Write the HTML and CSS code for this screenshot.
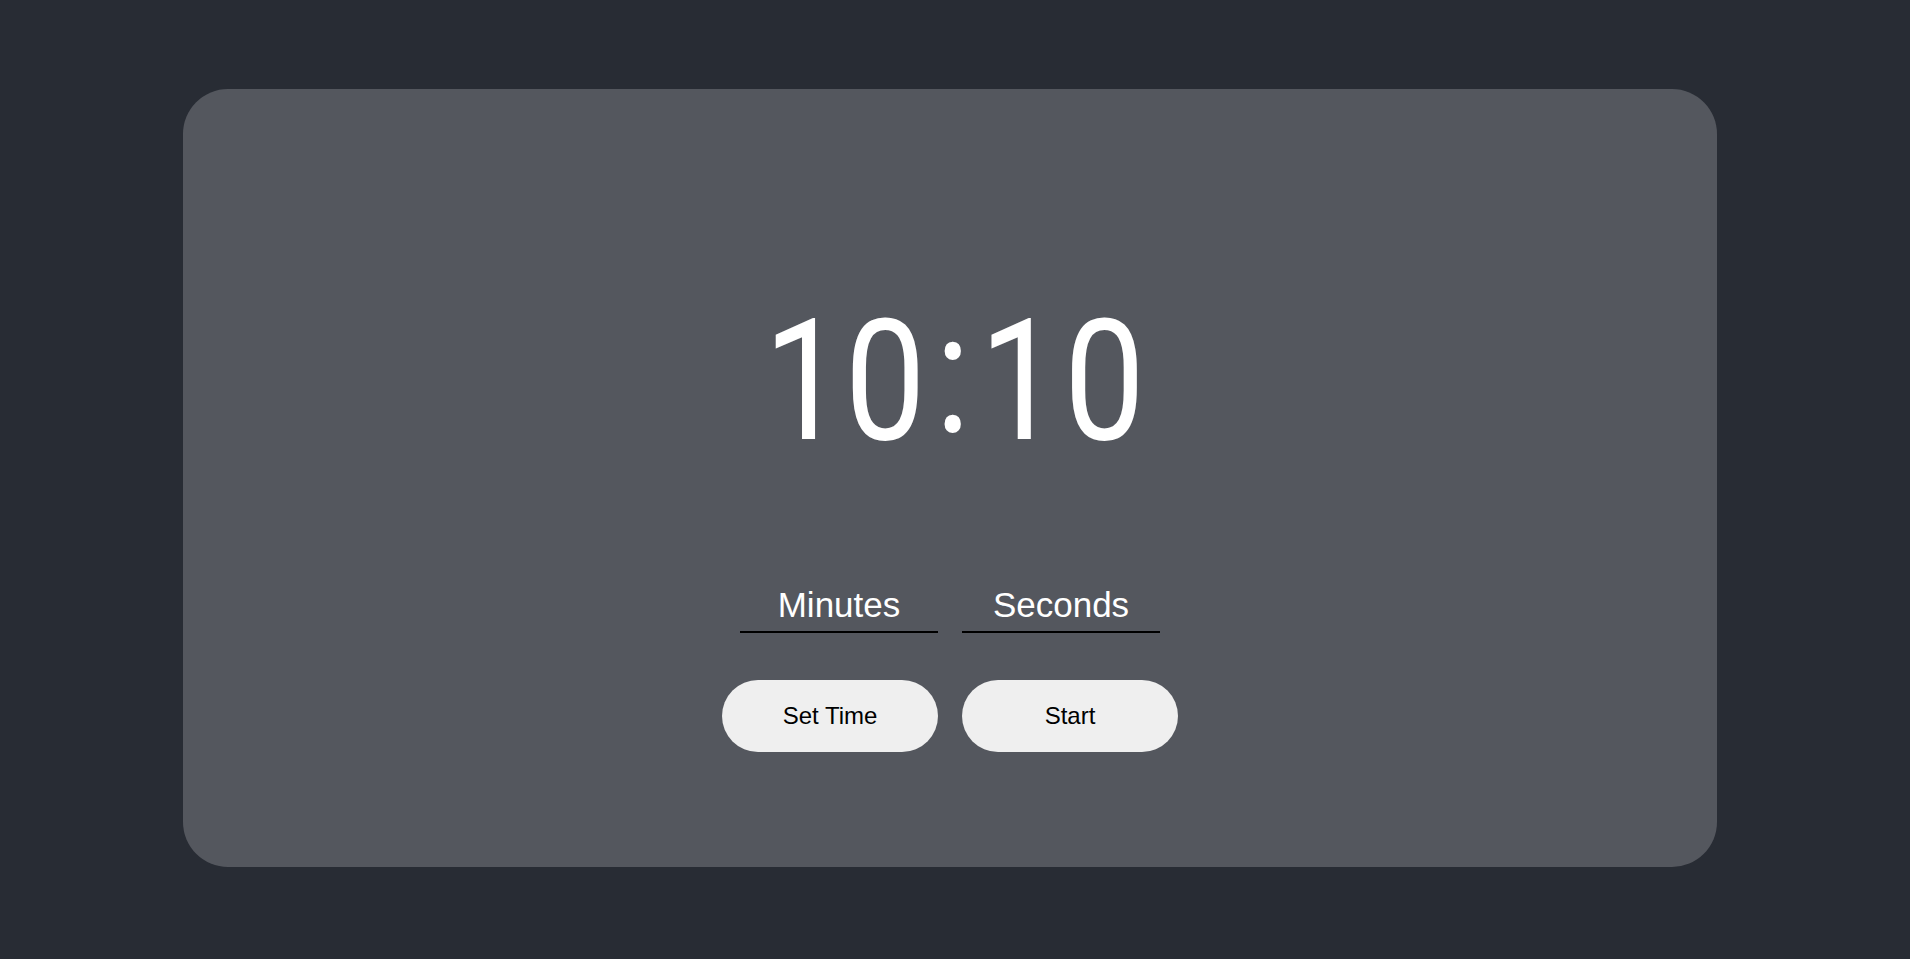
FILE: index.html
```html
<!DOCTYPE html>
<html lang="en">
<head>
<meta charset="utf-8">
<title>Timer</title>
<link rel="stylesheet" href="styles.css">
</head>
<body>
  <main class="card">
    <div class="time"><span class="time-inner">10<span class="colon">:</span>1<span class="last">0</span></span></div>
    <div class="inputs">
      <input class="field" type="text" placeholder="Minutes">
      <input class="field" type="text" placeholder="Seconds">
    </div>
    <div class="buttons">
      <button class="btn" type="button">Set Time</button>
      <button class="btn" type="button">Start</button>
    </div>
  </main>
</body>
</html>
```
FILE: styles.css
```css
html, body {
  margin: 0;
  padding: 0;
  height: 100%;
}
body {
  background: #282c34;
  font-family: "Liberation Sans", Arial, sans-serif;
  padding-top: 89px;
  box-sizing: border-box;
}
.card {
  margin-left: 183px;
  width: 1534px;
  height: 778px;
  box-sizing: border-box;
  background: #54575e;
  border-radius: 45px;
  padding-top: 201px;
  display: flex;
  flex-direction: column;
  align-items: center;
}
.time {
  height: 169px;
  line-height: 169px;
  font-family: Roboto, sans-serif;
  font-size: 169px;
  color: #ffffff;
  white-space: nowrap;
  padding-left: 8px;
}
.time-inner {
  display: inline-block;
  transform: scaleX(0.853);
}
.colon {
  display: inline-block;
  margin: 0 11px;
  vertical-align: 7px;
}
.last {
  margin-left: 4px;
}
.inputs {
  margin-top: 126px;
  display: flex;
  gap: 24px;
}
.field {
  width: 198px;
  box-sizing: border-box;
  height: 48px;
  padding: 0 0 6px;
  margin: 0;
  border: none;
  border-bottom: 2px solid #000000;
  background: transparent;
  font-family: "Liberation Sans", Arial, sans-serif;
  font-size: 35px;
  line-height: 40px;
  color: #ffffff;
  text-align: center;
  outline: none;
}
.field::placeholder {
  color: #ffffff;
  opacity: 1;
}
.buttons {
  margin-top: 47px;
  display: flex;
  gap: 24px;
}
.btn {
  width: 216px;
  height: 72px;
  border: none;
  border-radius: 36px;
  background: #efefef;
  color: #000000;
  font-family: "Liberation Sans", Arial, sans-serif;
  font-size: 24px;
  padding: 0;
  cursor: pointer;
}
```
